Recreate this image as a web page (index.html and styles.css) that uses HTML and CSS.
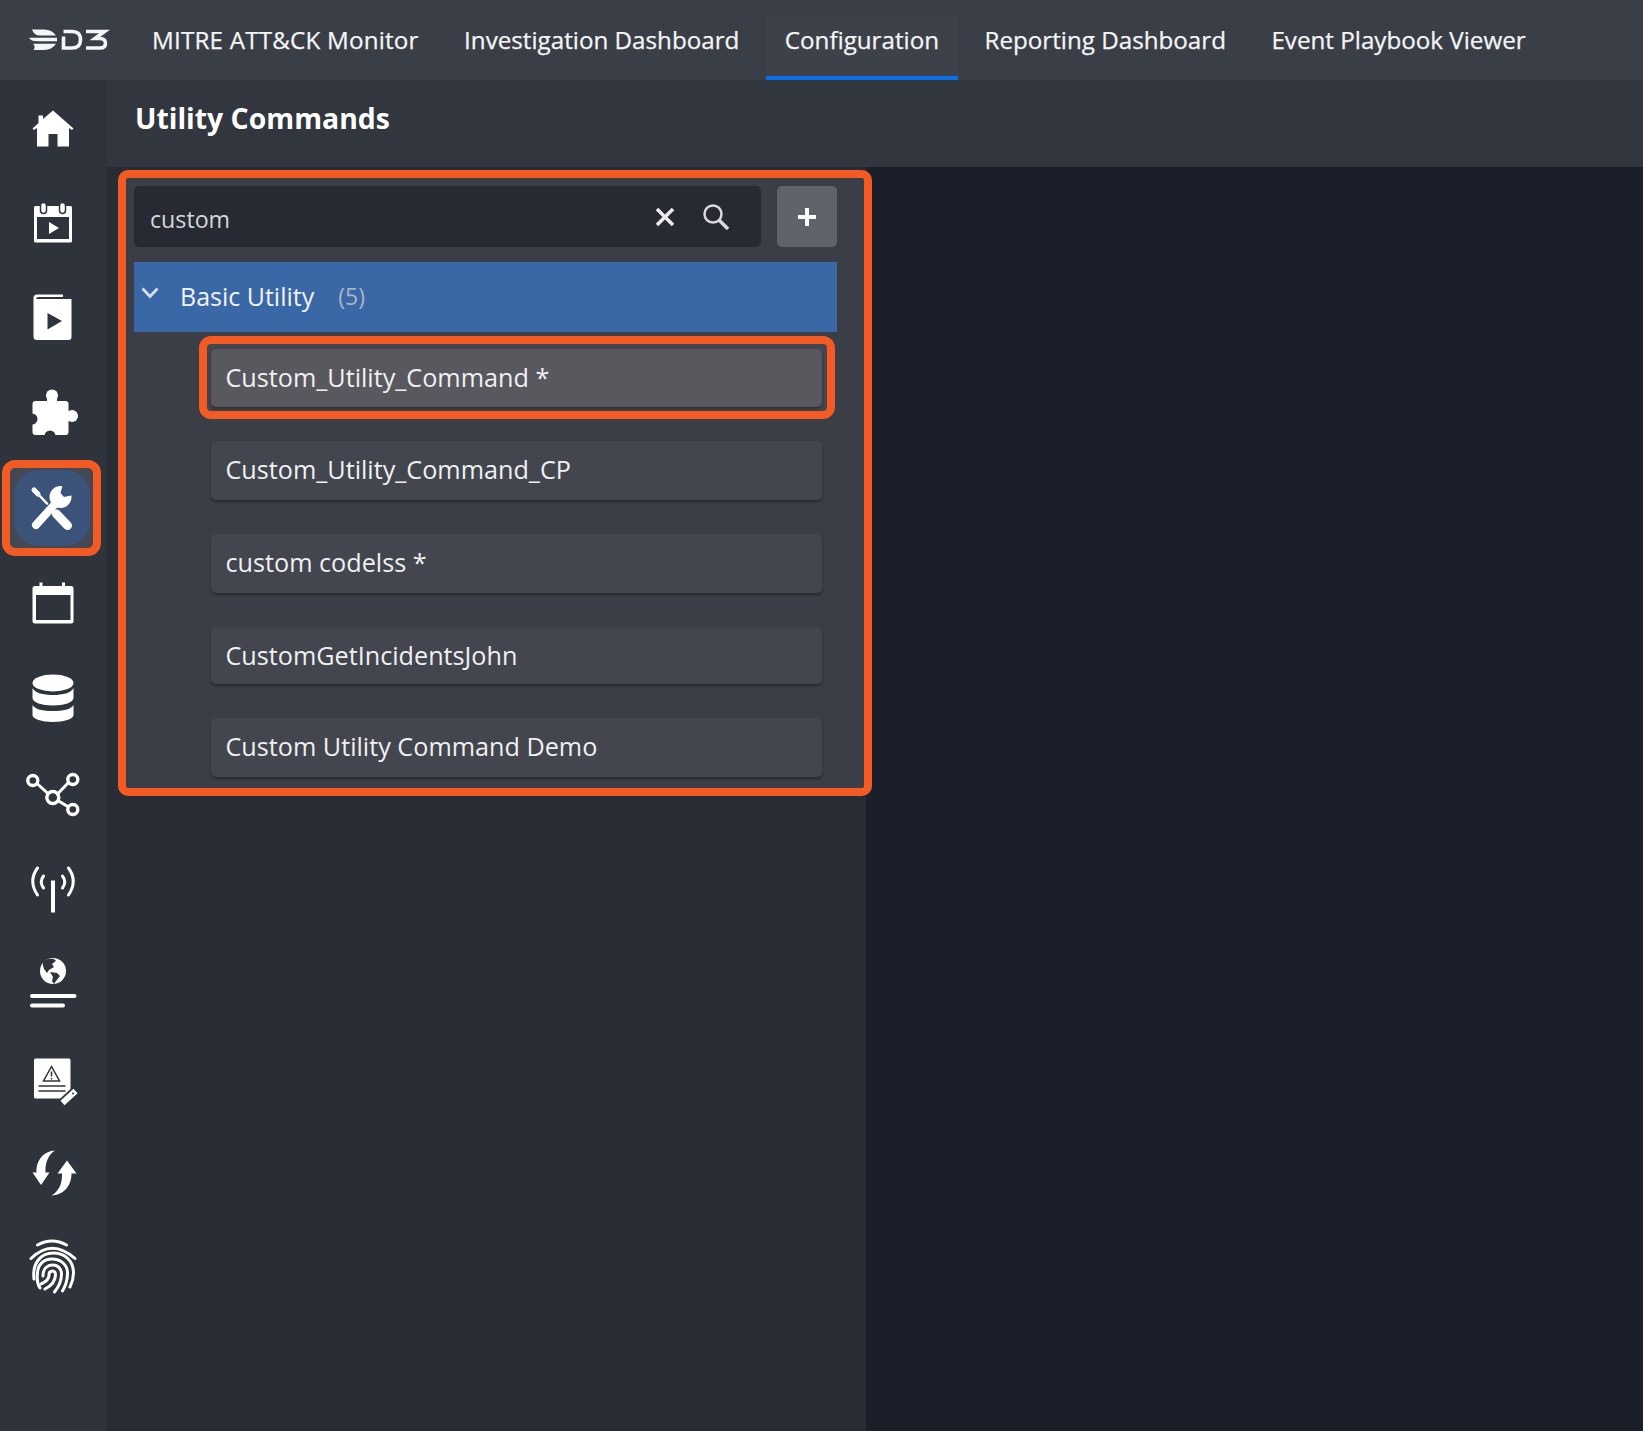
FILE: index.html
```html
<!DOCTYPE html>
<html lang="en">
<head>
<meta charset="utf-8">
<title>Utility Commands</title>
<link rel="stylesheet" href="styles.css">
</head>
<body>
<div class="app">
  <header class="topbar">
    <svg class="logo" viewBox="0 0 80 24" aria-label="D3">
      <path class="logo-fill" d="M3 1.500H15Q23 1.500 27 7.500H11Q5 7.500 3 1.500Z"/>
      <path class="logo-fill" d="M0 9.800H28V13.300H8Q2 13.300 0 9.800Z"/>
      <path class="logo-fill" d="M4 15.800H27Q23 22 15 22H4.500Q7 18.500 4 15.800Z"/>
      <path class="logo-line" d="M34.500 8.500V20H43Q51.500 20 51.500 11.800Q51.500 3.500 43 3.500H34.500"/>
      <path class="logo-line" d="M57 3.500H75.500L66 10.500H71Q76.500 10.500 76.500 15.200Q76.500 20 71 20H57"/>
    </svg>
    <nav class="tabs">
      <a class="tab tab-wide">MITRE ATT&amp;CK Monitor</a>
      <a class="tab">Investigation Dashboard</a>
      <a class="tab tab-active">Configuration</a>
      <a class="tab">Reporting Dashboard</a>
      <a class="tab">Event Playbook Viewer</a>
    </nav>
  </header>
  <div class="main">
    <aside class="sidebar">
      <div class="side-item">
        <svg class="ico" viewBox="0 0 48 48"><path class="w" d="M24 6.500L44.500 24.500L43 26L40 24V42.500H28.500V30H19.500V42.500H8V24L5 26L3.500 24.500L9.500 19V11.500H14V15Z"/></svg>
      </div>
      <div class="side-item">
        <svg class="ico" viewBox="0 0 48 48">
          <rect class="w" x="5" y="7" width="38" height="36.500" rx="1.500"/>
          <rect class="d" x="8" y="18" width="32" height="22"/>
          <rect class="w ring" x="11.500" y="3.500" width="6" height="11" rx="3"/>
          <rect class="w ring" x="30.500" y="3.500" width="6" height="11" rx="3"/>
          <path class="w" d="M20 23L30 29L20 35Z"/>
        </svg>
      </div>
      <div class="side-item">
        <svg class="ico" viewBox="0 0 48 48">
          <path class="w" d="M8 0.500H34V3H9.500Q7.500 3 7 5H42.500V43Q42.500 46 39.500 46H8Q4.500 46 4.500 42.500V4Q4.500 0.500 8 0.500Z"/>
          <path class="d" d="M18.500 19L33 27L18.500 35.500Z"/>
        </svg>
      </div>
      <div class="side-item">
        <svg class="ico" viewBox="0 0 48 48">
          <rect class="w" x="3.500" y="12" width="36" height="34" rx="3"/>
          <circle class="w" cx="23" cy="6.500" r="6"/>
          <rect class="w" x="18" y="8" width="10" height="8"/>
          <circle class="w" cx="43" cy="27" r="6"/>
          <rect class="w" x="36" y="22" width="6" height="10"/>
          <circle class="d" cx="3" cy="30" r="5.500"/>
          <circle class="d" cx="21" cy="47" r="5.500"/>
        </svg>
      </div>
      <div class="side-callout">
        <div class="side-active">
          <svg class="ico" viewBox="0 0 48 48">
            <path class="st-w s5" d="M6 6L10 10"/>
            <path class="st-w s25" d="M8 8L19 19.500"/>
            <path class="st-w s9" d="M28.500 30L39.500 41.500"/>
            <path class="st-w s8" d="M8 41L27 20"/>
            <circle class="w" cx="32.500" cy="13" r="11"/>
            <path class="b" d="M35 0L32.500 9L36 13L45.500 11L48 -1Z"/>
          </svg>
        </div>
      </div>
      <div class="side-item">
        <svg class="ico" viewBox="0 0 48 48">
          <rect class="w" x="3.500" y="7" width="41" height="37.500" rx="2.500"/>
          <rect class="w" x="10.500" y="3.500" width="3" height="6"/>
          <rect class="w" x="33" y="3.500" width="3" height="6"/>
          <rect class="d" x="7" y="16" width="34.500" height="25"/>
        </svg>
      </div>
      <div class="side-item">
        <svg class="ico" viewBox="0 0 48 48">
          <ellipse class="w" cx="24" cy="9" rx="20.500" ry="8.500"/>
          <path class="w" d="M3.500 14C6 19 14 21 24 21S42 19 44.500 14V24C44.500 28.500 35 31.500 24 31.500S3.500 28.500 3.500 24Z"/>
          <path class="w" d="M3.500 31C6 35.500 14 37 24 37S42 35.500 44.500 31V41C44.500 45 35 48 24 48S3.500 45 3.500 41Z"/>
        </svg>
      </div>
      <div class="side-item">
        <svg class="ico" viewBox="0 0 48 48">
          <path class="st-w s3" d="M7.500 14L20 25.500M40 13L28 25.500M28 31L39.500 38"/>
          <circle class="ring-ico" cx="3.800" cy="11.500" r="5"/>
          <circle class="ring-ico" cx="43.800" cy="10.500" r="5"/>
          <circle class="ring-ico" cx="23.800" cy="28.500" r="6"/>
          <circle class="ring-ico" cx="43.800" cy="40.500" r="5"/>
        </svg>
      </div>
      <div class="side-item">
        <svg class="ico" viewBox="0 0 48 48">
          <path class="st-w s4 butt" d="M24 16.500V48.500"/>
          <path class="st-w s3" d="M8.500 4Q-1 17 8.500 31M14.500 12Q10 18 14.500 24M39.500 4Q49 17 39.500 31M33.500 12Q38 18 33.500 24"/>
        </svg>
      </div>
      <div class="side-item">
        <svg class="ico" viewBox="0 0 48 48">
          <circle class="w" cx="24" cy="12" r="13"/>
          <path class="d" d="M14 3Q18 -1 25 0L27 2L23 5L25 8L20 11L18 14L15 10Q13 6 14 3Z"/>
          <path class="d" d="M21 13L28 14L31 17L27 22L25 25L23 22L24 18Z"/>
          <path class="st-w s4" d="M3 37H45.500M3 46.500H34"/>
        </svg>
      </div>
      <div class="side-item">
        <svg class="ico doc" viewBox="0 0 48 48">
          <rect class="w" x="5" y="4.500" width="36.500" height="40" rx="1.500"/>
          <path class="st-d s15" d="M22.500 12.500L14.500 27H30.500Z"/>
          <path class="st-d s15" d="M22.500 17.500V22.500M22.500 24V25.500"/>
          <path class="st-d s15" d="M9.500 32H36.500M9.500 37H36.500"/>
          <path class="st-d s9" d="M32 50L47 36"/>
          <path class="st-w s6 butt" d="M33.500 49L46.500 37"/>
          <circle class="d" cx="44" cy="39.500" r="1"/>
        </svg>
      </div>
      <div class="side-item">
        <svg class="ico" viewBox="0 0 48 48">
          <path class="w" d="M26 1.500C15 2 7 11 7.500 23.500H3.500L12 36L20.500 23.500H16.500C16 14 19 6 26 1.500Z"/>
          <path class="w" d="M22.500 46.500C33.500 46 42.500 38 42.500 24.500H47.500L38 11.500L28.500 24.500H33C33.500 34 30 42 22.500 46.500Z"/>
        </svg>
      </div>
      <div class="side-item">
        <svg class="ico" viewBox="0 0 48 48">
          <path class="st-w s3" d="M8.500 1Q23 -7 37.500 1M2 14.500Q23 -6 46 14.500"/>
          <path class="st-w s3" d="M5 35C3 19 12 9 24 9C36 9 44.500 17 44.500 29C44.500 34 43.500 38 41 43"/>
          <path class="st-w s3" d="M11 44C7.500 39 8 33 8.500 29C9 20 15 15 23 15C32 15 38.500 21 38.500 29C38.500 36 36.500 42 33.500 47"/>
          <path class="st-w s3" d="M14 32C14 25 18 21 24 21C29 21 32.500 25 32.500 30C32.500 37 29.500 43 25.500 48"/>
          <path class="st-w s3" d="M16 45C22 42 26.500 37 26.500 30.500C26.500 28 25 27 23.500 27C21 27 20 29 20 31C20 35 17 38 12 40"/>
        </svg>
      </div>
    </aside>
    <div class="workspace">
      <div class="page-head"><h1 class="page-title">Utility Commands</h1></div>
      <div class="content">
        <section class="panel">
          <div class="callout">
            <div class="search-row">
              <div class="search">
                <span class="search-text">custom</span>
                <svg class="search-x" viewBox="0 0 20 20"><path class="st-l" d="M2 2L18 18M18 2L2 18"/></svg>
                <svg class="search-mag" viewBox="0 0 28 28"><circle class="st-l2" cx="11" cy="11" r="8.500"/><path class="st-l2 thick" d="M17 17L26 26"/></svg>
              </div>
              <button class="add" type="button"><svg class="add-ico" viewBox="0 0 20 20"><path class="st-plus" d="M10 1V19M1 10H19"/></svg></button>
            </div>
            <div class="group">
              <svg class="chev" viewBox="0 0 18 12"><path class="st-chev" d="M1.500 1.500L9 9.500L16.500 1.500"/></svg>
              <span class="group-name">Basic Utility</span>
              <span class="group-count">(5)</span>
            </div>
            <ul class="list">
              <li class="sel-callout"><div class="item item-sel">Custom_Utility_Command *</div></li>
              <li class="item">Custom_Utility_Command_CP</li>
              <li class="item">custom codelss *</li>
              <li class="item item-short">CustomGetIncidentsJohn</li>
              <li class="item">Custom Utility Command Demo</li>
            </ul>
          </div>
        </section>
        <section class="detail"></section>
      </div>
    </div>
  </div>
</div>
</body>
</html>
```
FILE: styles.css
```css
* { box-sizing: border-box; }
html, body { margin: 0; height: 100%; }
body {
  background: #1b1f2a;
  color: #f1f2f3;
  font-family: "Open Sans", "Noto Sans", "Liberation Sans", sans-serif;
  overflow: hidden;
}
.app { display: flex; flex-direction: column; height: 1431px; }

/* top bar */
.topbar {
  height: 80px;
  flex: none;
  display: flex;
  align-items: flex-start;
  background: #3a3e47;
  padding-left: 29px;
}
.logo { width: 80px; height: 24px; margin-top: 28px; flex: none; overflow: visible; }
.logo-fill { fill: #f4f5f6; }
.logo-line { fill: none; stroke: #f4f5f6; stroke-width: 3.6; }
.tabs { display: flex; gap: 7.4px; margin-left: 24px; margin-top: 15px; }
.tab {
  height: 65px;
  padding: 7px 19px 0;
  font-size: 24.2px;
  font-weight: 500;
  line-height: 36px;
  color: #f4f5f6;
  white-space: nowrap;
  border-radius: 4px 4px 0 0;
  -webkit-text-stroke: .25px #f4f5f6;
}
.tab-wide { letter-spacing: .2px; }
.tab-active {
  background: #3d414a;
  border-bottom: 4px solid #0b6fe8;
  border-radius: 4px 4px 0 0;
}

/* layout */
.main { flex: 1; display: flex; min-height: 0; }
.sidebar { width: 106px; flex: none; background: #2f333b; display: flex; flex-direction: column; }
.side-item { height: 95px; display: flex; align-items: center; justify-content: center; }
.side-callout {
  height: 96px;
  margin: 0 5px -1px 2px;
  border: 8px solid #f45b24;
  border-radius: 13px;
  background: #444852;
  display: flex;
  align-items: center;
  justify-content: center;
  padding-left: 1px;
}
.side-active {
  width: 76px;
  height: 76px;
  border-radius: 24px;
  background: #3b5279;
  display: flex;
  align-items: center;
  justify-content: center;
}
.ico { width: 48px; height: 48px; overflow: visible; display: block; }
.w { fill: #fff; }
.d { fill: #2f333b; }
.b { fill: #3b5279; }
.ring { stroke: #2f333b; stroke-width: 1.5; }
.st-w { fill: none; stroke: #fff; stroke-linecap: round; }
.st-d { fill: none; stroke: #2f333b; }
.butt { stroke-linecap: butt; }
.s15 { stroke-width: 1.5; }
.s25 { stroke-width: 2.5; }
.s3 { stroke-width: 3; }
.s4 { stroke-width: 4; }
.s5 { stroke-width: 5; }
.s6 { stroke-width: 6; }
.s8 { stroke-width: 8; }
.s9 { stroke-width: 9; }
.ring-ico { fill: #2f333b; stroke: #fff; stroke-width: 3.4; }

.workspace { flex: 1; min-width: 0; display: flex; flex-direction: column; }
.page-head { height: 87px; flex: none; background: #32363f; padding: 16px 0 0 29px; }
.page-title { margin: 0; font-size: 28.4px; line-height: 44px; font-weight: 700; color: #fff; }
.content { flex: 1; display: flex; min-height: 0; }
.panel { width: 760px; flex: none; background: #282c35; padding: 3px 0 0 12px; }
.detail { flex: 1; background: #1b1f2a; }

/* orange callout with list: it overhangs the panel's right edge */
.callout {
  position: relative;
  z-index: 1;
  width: 754px;
  height: 626px;
  border: 8px solid #f45b24;
  border-radius: 10px;
  background: #3b3e47;
  padding: 8px 27px 0 8px;
}
.search-row { display: flex; gap: 16px; }
.search {
  flex: 1;
  height: 61px;
  background: #272a32;
  border-radius: 5px;
  display: flex;
  align-items: center;
  padding-left: 16px;
}
.search-text { flex: 1; font-size: 23.2px; color: #d5d7da; padding-top: 5px; }
.search-x { width: 20px; height: 20px; margin-right: 27px; }
.search-mag { width: 28px; height: 28px; margin-right: 31px; }
.st-l { fill: none; stroke: #eceded; stroke-width: 3.5; }
.st-l2 { fill: none; stroke: #d9dadc; stroke-width: 2.5; }
.thick { stroke-width: 3.5; }
.add {
  width: 60px;
  height: 61px;
  border: 0;
  padding: 0;
  border-radius: 5px;
  background: #5f636c;
  display: flex;
  align-items: center;
  justify-content: center;
}
.add-ico { width: 20px; height: 20px; }
.st-plus { stroke: #fff; stroke-width: 4; fill: none; }

.group {
  height: 70px;
  margin-top: 15px;
  padding: 0 0 2px 7px;
  background: #3a67a6;
  display: flex;
  align-items: center;
  color: #f1f2f3;
}
.chev { width: 18px; height: 12px; margin: 0 21px 0 0; transform: translateY(-3px); flex: none; }
.st-chev { fill: none; stroke: #d8dfeb; stroke-width: 2.8; }
.group-name { font-size: 25px; }
.group-count { font-size: 23px; color: #a9b4c6; margin-left: 24px; }

.list { list-style: none; margin: 0; padding: 4px 0 0; }
.sel-callout {
  width: 636px;
  height: 83px;
  margin: 0 0 22px 65px;
  border: 8px solid #f45b24;
  border-radius: 12px;
  background: #43464e;
  padding: 5px 5px 0 4px;
}
.item {
  width: 611px;
  height: 59px;
  margin: 0 0 34px 77px;
  padding-left: 14.5px;
  background: #43464e;
  border-radius: 5px;
  box-shadow: 0 2px 3px rgba(0, 0, 0, .35);
  font-size: 25.2px;
  line-height: 57px;
  color: #eff0f1;
  white-space: nowrap;
}
.item-sel { background: #59585e; margin: 0; height: 58px; width: 100%; }
.item-short { height: 57px; line-height: 57px; }
```
